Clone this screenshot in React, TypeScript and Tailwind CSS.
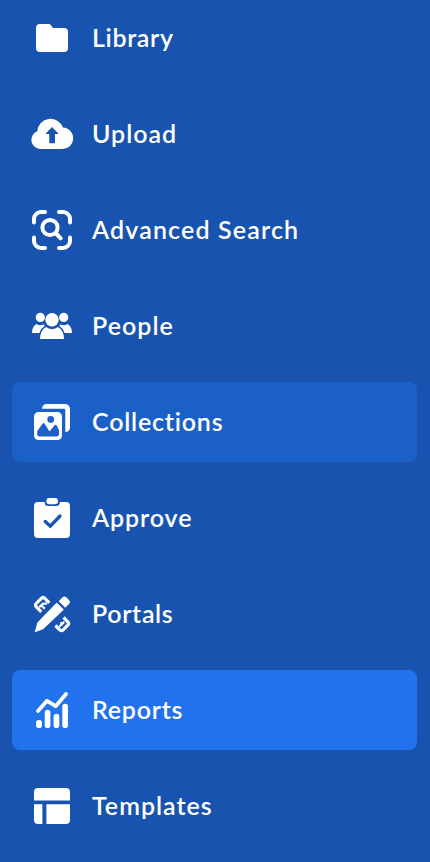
import React from 'react';
import clsx from 'clsx';

type NavItem = {
  label: string;
  icon: React.ReactNode;
  tracking: string;
  state?: 'hover' | 'active';
};

const items: NavItem[] = [
  {
    label: 'Library',
    tracking: 'tracking-[0.65px]',
    icon: (
      <path d="M12 10h8.3c1.4 0 2.4.6 3.1 1.7l.8 1.2c.5.8 1 1.1 2 1.1H36a4 4 0 0 1 4 4v16a4 4 0 0 1-4 4H12a4 4 0 0 1-4-4V14a4 4 0 0 1 4-4z" />
    ),
  },
  {
    label: 'Upload',
    tracking: 'tracking-[1px]',
    icon: (
      <path
        fillRule="evenodd"
        d="M12 39a9.2 9.2 0 0 1-2.7-17.8A13.2 13.2 0 0 1 34.9 17.6 10.7 10.7 0 0 1 34 39zM24 17l-6.7 6.9h4v9.4H27v-9.4h3.8z"
      />
    ),
  },
  {
    label: 'Advanced Search',
    tracking: 'tracking-[1.15px]',
    icon: (
      <g fill="none" stroke="currentColor" strokeWidth="4" strokeLinecap="round">
        <path d="M6 16.5V13a7 7 0 0 1 7-7h4M31 6h4a7 7 0 0 1 7 7v3.5M42 31.5V35a7 7 0 0 1-7 7h-4M17 42h-4a7 7 0 0 1-7-7v-3.5" />
        <circle cx="22" cy="21.5" r="7.6" />
        <path d="M27.5 27l5.2 5.4" />
      </g>
    ),
  },
  {
    label: 'People',
    tracking: 'tracking-[1.05px]',
    icon: (
      <>
        <circle cx="12.3" cy="15.4" r="4.6" />
        <circle cx="35.7" cy="15.4" r="4.6" />
        <circle cx="24" cy="17.7" r="6.7" />
        <path d="M12 37c0-5.5 2-9.5 6-11.9a9.5 9.5 0 0 0 12 0c4 2.4 6 6.4 6 11.9z" />
        <path d="M4 31c0-4.2 1.6-7.3 4.5-9 2.2 1.5 5 1.6 7.2.3l1 1.7c-2.700 1.7-4.4 4-5.3 7zM44 31c0-4.200-1.6-7.3-4.5-9-2.2 1.5-5 1.6-7.2.3l-1 1.7c2.7 1.7 4.4 4 5.3 7z" />
      </>
    ),
  },
  {
    label: 'Collections',
    tracking: 'tracking-[0.8px]',
    state: 'hover',
    icon: (
      <>
        <path d="M14 10.7c.2-2.9 1.9-4.7 4.6-4.7H37a5 5 0 0 1 5 5v18.4c0 2.7-1.8 4.4-4.7 4.6V12.2c0-1-.5-1.5-1.5-1.5z" />
        <path
          fillRule="evenodd"
          d="M10.5 14h19a4.5 4.5 0 0 1 4.5 4.5v19a4.5 4.5 0 0 1-4.5 4.5h-19A4.5 4.5 0 0 1 6 37.5v-19a4.5 4.5 0 0 1 4.5-4.5zM22.7 18a3.4 3.4 0 1 0 0 6.8 3.4 3.4 0 0 0 0-6.8zM9.2 33.2V36c0 1.6.8 2.4 2.4 2.4h17c1.6 0 2.4-.8 2.4-2.4v-3.8l-2.3-4.8c-.5-1-1.5-1-2.1-.1l-5.1 6.2-4.9-7.8c-.6-.9-1.5-.9-2.1 0z"
        />
      </>
    ),
  },
  {
    label: 'Approve',
    tracking: 'tracking-[0.9px]',
    icon: (
      <>
        <path d="M10 8h6.7v.6a3.500 3.500 0 0 0 3.500 3.500h8a3.500 3.500 0 0 0 3.500-3.500V8H38a4 4 0 0 1 4 4v28a4 4 0 0 1-4 4H10a4 4 0 0 1-4-4V12a4 4 0 0 1 4-4z" />
        <rect x="18.3" y="4" width="11.7" height="6.3" rx="3" />
        <path d="M17.3 27.500l5 4.700L32 22" fill="none" stroke="#1854af" strokeWidth="3.3" strokeLinecap="round" />
      </>
    ),
  },
  {
    label: 'Portals',
    tracking: 'tracking-[0.65px]',
    icon: (
      <>
        <path d="M28.7 13.3l6.3 6.3-20.3 19.2-7.2 2.700 2.400-8.500z" stroke="currentColor" strokeWidth="1.200" strokeLinejoin="round" />
        <path d="M30.700 11.300l4-4a2.500 2.500 0 0 1 3.500 0l3 3a2.500 2.500 0 0 1 0 3.500l-4 4z" />
        <g fill="none" stroke="currentColor" strokeLinejoin="round">
          <path d="M21.300 12.800l-4.500-4.500a2.500 2.500 0 0 0-3.400 0L8.300 13.400a2.500 2.500 0 0 0 0 3.400l5 5" strokeWidth="3.200" />
          <path d="M11.200 17.200l3.800-3.600h4M13.300 15.300l3.500 3.500" strokeWidth="2.200" />
          <path d="M35.500 27.500l4.300 4.300a2.500 2.500 0 0 1 0 3.400l-4.600 4.600a2.500 2.500 0 0 1-3.400 0l-4.300-4.300" strokeWidth="3.200" />
          <path d="M31.500 36.500l4.700-4.600M36 33h-3.800" strokeWidth="2.200" />
        </g>
      </>
    ),
  },
  {
    label: 'Reports',
    tracking: 'tracking-[0.75px]',
    state: 'active',
    icon: (
      <>
        <rect x="8" y="34" width="6" height="8" rx="2.8" />
        <rect x="16.7" y="23.7" width="5.7" height="18.3" rx="2.8" />
        <rect x="25.6" y="27.7" width="5.7" height="14.3" rx="2.8" />
        <rect x="34.3" y="17.7" width="5.7" height="24.3" rx="2.8" />
        <path d="M10 25l9-10.200 8.700 5.400L38 8" fill="none" stroke="currentColor" strokeWidth="3.8" strokeLinecap="round" strokeLinejoin="round" />
      </>
    ),
  },
  {
    label: 'Templates',
    tracking: 'tracking-[1px]',
    icon: (
      <path d="M10 6h28a4 4 0 0 1 4 4v8.400H6V10a4 4 0 0 1 4-4zM6 22.300h8.400V42H10a4 4 0 0 1-4-4zM18.400 22.300H42V38a4 4 0 0 1-4 4H18.400z" />
    ),
  },
];

export default function App() {
  return (
    <div className="h-[862px] w-[430px] overflow-hidden bg-[#1854af]">
      <nav className="-mt-0.5 flex flex-col gap-4 pl-3 pr-[13px]">
        {items.map((item) => (
          <a
            key={item.label}
            className={clsx(
              'flex h-20 shrink-0 items-center gap-4 rounded-lg pl-4 text-white',
              item.state === 'hover' && 'bg-[#1b60c6]',
              item.state === 'active' && 'bg-[#2271ed]',
            )}
          >
            <svg viewBox="0 0 48 48" className="size-12 shrink-0" fill="currentColor">
              {item.icon}
            </svg>
            <span className={clsx("mb-0.5 whitespace-nowrap font-['Lato',sans-serif] text-[25px] font-semibold leading-8", item.tracking)}>
              {item.label}
            </span>
          </a>
        ))}
      </nav>
    </div>
  );
}
